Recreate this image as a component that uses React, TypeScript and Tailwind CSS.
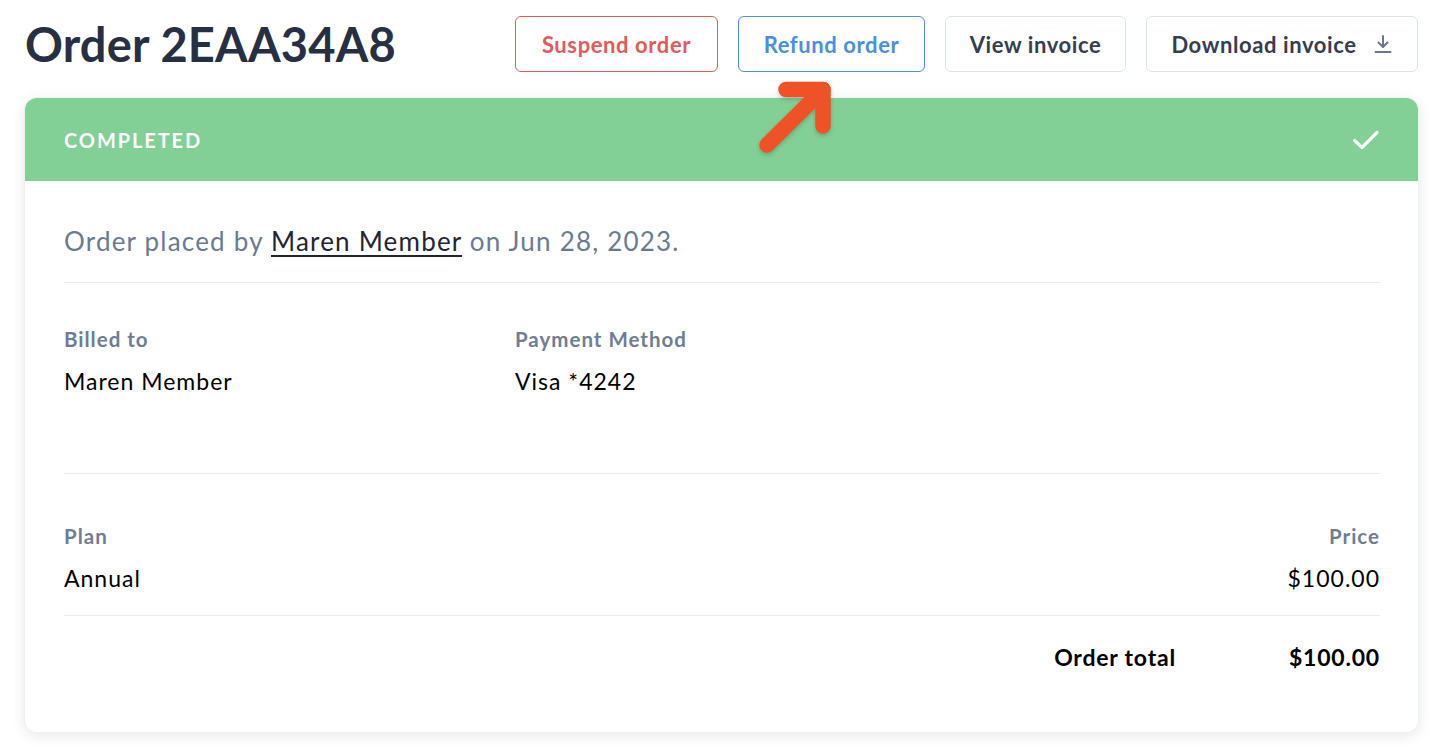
import React from "react";

function DownloadIcon() {
  return (
    <svg width="20" height="20" viewBox="0 0 20 20" fill="none" stroke="#6b7891" strokeWidth="2" strokeLinecap="round" strokeLinejoin="round">
      <path d="M10 2v11" />
      <path d="M5.5 8.5L10 13l4.5-4.5" />
      <path d="M2.5 18h15" />
    </svg>
  );
}

function CheckIcon() {
  return (
    <svg width="28" height="22" viewBox="0 0 28 22" fill="none" stroke="#ffffff" strokeWidth="3.2" strokeLinecap="round" strokeLinejoin="round">
      <path d="M2.5 11.5L10 18.5L25 3.5" />
    </svg>
  );
}

export default function App() {
  const font = { fontFamily: "Lato, 'Noto Sans', sans-serif" };
  return (
    <div className="relative min-h-[752px] w-[1440px] bg-white text-black" style={font}>
      <div className="pl-[25px] pr-[22px] pt-[16px]">
        <div className="flex items-center justify-between">
          <h1 className="text-[47px] font-bold leading-none tracking-[0.2px] text-[#272f42]">Order 2EAA34A8</h1>
          <div className="flex gap-[20px]">
            <button className="h-[56px] w-[203px] rounded-[6px] border border-[#e35a58] bg-white text-[22px] font-bold tracking-[0.6px] text-[#e35a58]">Suspend order</button>
            <button className="h-[56px] w-[187px] rounded-[6px] border border-[#4a8fe0] bg-white text-[22px] font-bold tracking-[0.6px] text-[#4a8fe0]">Refund order</button>
            <button className="h-[56px] w-[181px] rounded-[6px] border border-[#dde3ec] bg-white text-[22px] font-bold tracking-[0.6px] text-[#353d4f]">View invoice</button>
            <button className="flex h-[56px] w-[272px] items-center justify-center gap-[16px] rounded-[6px] border border-[#dde3ec] bg-white text-[22px] font-bold tracking-[0.6px] text-[#353d4f]">
              <span>Download invoice</span>
              <DownloadIcon />
            </button>
          </div>
        </div>

        <div className="mt-[26px] overflow-hidden rounded-[12px] bg-white shadow-[0_3px_14px_rgba(30,40,60,0.12)] ring-1 ring-[#eef1f5]">
          <div className="flex h-[83px] items-center justify-between bg-[#82d096] pl-[39px] pr-[38px]">
            <span className="text-[20px] font-bold tracking-[1.9px] text-white">COMPLETED</span>
            <CheckIcon />
          </div>
          <div className="pl-[39px] pr-[38px] pb-[57px]">
            <div className="flex h-[102px] items-center border-b border-[#e6ebf1] pt-[19px]">
              <p className="text-[26px] tracking-[1.2px] text-[#6b7a90]">
                Order placed by{" "}
                <a className="text-[#1f2535] underline decoration-[2px] underline-offset-[4px]">Maren Member</a>{" "}
                on Jun 28, 2023.
              </p>
            </div>
            <div className="flex h-[191px] border-b border-[#e6ebf1] pt-[41px] tracking-[1px]">
              <div className="w-[451px]">
                <div className="text-[20.5px] font-bold text-[#6f7d93]">Billed to</div>
                <div className="mt-[9px] text-[23px]">Maren Member</div>
              </div>
              <div>
                <div className="text-[20.5px] font-bold text-[#6f7d93]">Payment Method</div>
                <div className="mt-[9px] text-[23px]">Visa *4242</div>
              </div>
            </div>
            <div className="flex h-[142px] items-start justify-between border-b border-[#e6ebf1] pt-[47px] tracking-[1px]">
              <div>
                <div className="text-[20.5px] font-bold text-[#6f7d93]">Plan</div>
                <div className="mt-[9px] text-[23px]">Annual</div>
              </div>
              <div className="text-right">
                <div className="text-[20.5px] font-bold text-[#6f7d93]">Price</div>
                <div className="mt-[9px] text-[23px]">$100.00</div>
              </div>
            </div>
            <div className="flex justify-end pt-[24px] text-[23px] font-bold tracking-[0.8px]">
              <span>Order total</span>
              <span className="w-[204px] text-right">$100.00</span>
            </div>
          </div>
        </div>
      </div>

      <svg className="pointer-events-none absolute left-[750px] top-[72px]" width="95" height="95" viewBox="750 72 95 95" fill="none">
        <g stroke="#f05228" strokeWidth="15.5" strokeLinecap="round" strokeLinejoin="round" style={{ filter: "drop-shadow(0 2px 2px rgba(0,0,0,0.2))" }}>
          <path d="M767 145L823 89.5" />
          <path d="M786 89.5H823V126" />
        </g>
      </svg>
    </div>
  );
}
